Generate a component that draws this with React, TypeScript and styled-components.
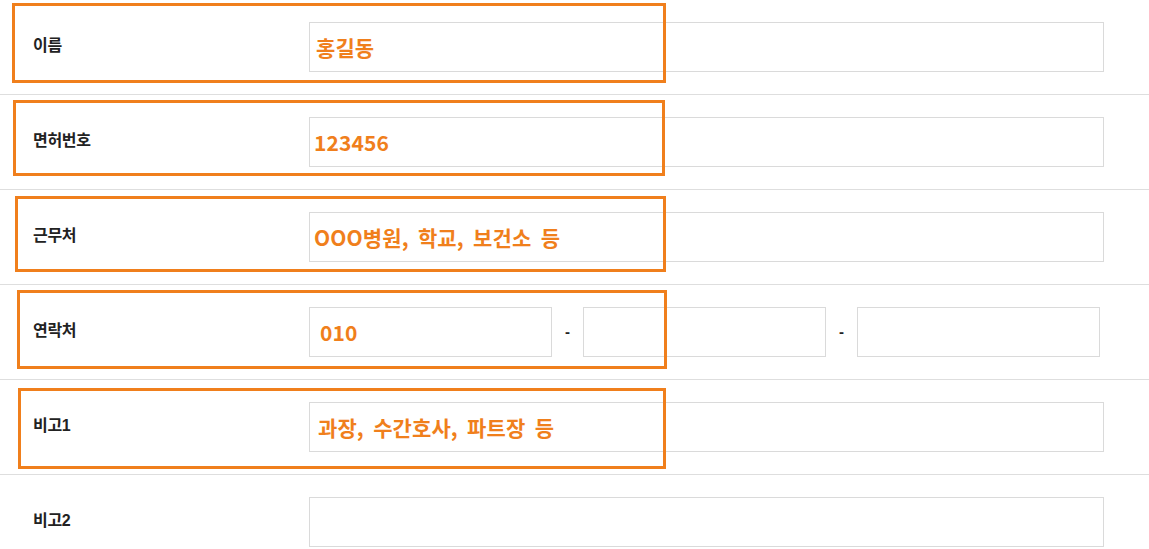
import styled, { createGlobalStyle } from "styled-components";

const GlobalStyle = createGlobalStyle`
  html, body {
    margin: 0;
    padding: 0;
    background: #fff;
  }
  body {
    font-family: "Liberation Sans", "Noto Sans CJK KR", sans-serif;
    color: #222;
  }
`;

const ORANGE = "#f07f1c";

const Page = styled.div`
  position: relative;
  width: 1149px;
  height: 549px;
  overflow: hidden;
`;

const Row = styled.div`
  display: grid;
  grid-template-columns: 276px 795px;
  align-items: center;
  height: 94px;
  padding-left: 33px;
  border-bottom: 1px solid #dedede;
`;

const Label = styled.div`
  font-size: 16px;
  font-weight: 700;
  color: #222;
  letter-spacing: -0.3px;
  margin-bottom: 6px;
`;

const Field = styled.div<{ $indent?: number; $width?: number }>`
  box-sizing: border-box;
  width: ${(p) => (p.$width ? `${p.$width}px` : "100%")};
  height: 50px;
  border: 1px solid #dadada;
  display: flex;
  align-items: center;
  padding-left: ${(p) => (p.$indent ?? 5) - 1}px;
  padding-bottom: 1px;
  font-family: "Noto Sans CJK KR", sans-serif;
  font-size: 21px;
  font-weight: 700;
  letter-spacing: 0.1px;
  word-spacing: 4.5px;
  color: ${ORANGE};
  white-space: pre;
`;

const PhoneGroup = styled.div`
  display: flex;
  align-items: center;
`;

const Dash = styled.span`
  width: 31px;
  text-align: center;
  font-size: 15px;
  font-weight: 700;
  color: #222;
  padding-bottom: 2px;
`;

const Mark = styled.div<{ $x: number; $y: number; $w: number; $h: number }>`
  position: absolute;
  left: ${(p) => p.$x}px;
  top: ${(p) => p.$y}px;
  width: ${(p) => p.$w}px;
  height: ${(p) => p.$h}px;
  box-sizing: border-box;
  border: 3px solid ${ORANGE};
  pointer-events: none;
`;

const marks = [
  { x: 12, y: 3, w: 654, h: 80 },
  { x: 13, y: 100, w: 652, h: 76 },
  { x: 15, y: 196, w: 651, h: 76 },
  { x: 17, y: 290, w: 650, h: 79 },
  { x: 18, y: 388, w: 648, h: 81 },
];

export default function App() {
  return (
    <Page>
      <GlobalStyle />
      <Row>
        <Label>이름</Label>
        <Field $indent={7}>홍길동</Field>
      </Row>
      <Row>
        <Label>면허번호</Label>
        <Field $indent={5}>123456</Field>
      </Row>
      <Row>
        <Label>근무처</Label>
        <Field $indent={5}>OOO병원, 학교, 보건소 등</Field>
      </Row>
      <Row>
        <Label>연락처</Label>
        <PhoneGroup>
          <Field $indent={11} $width={243}>010</Field>
          <Dash>-</Dash>
          <Field $width={243} />
          <Dash>-</Dash>
          <Field $width={243} />
        </PhoneGroup>
      </Row>
      <Row>
        <Label>비고1</Label>
        <Field $indent={9}>과장, 수간호사, 파트장 등</Field>
      </Row>
      <Row>
        <Label>비고2</Label>
        <Field />
      </Row>
      {marks.map((m, i) => (
        <Mark key={i} $x={m.x} $y={m.y} $w={m.w} $h={m.h} />
      ))}
    </Page>
  );
}
